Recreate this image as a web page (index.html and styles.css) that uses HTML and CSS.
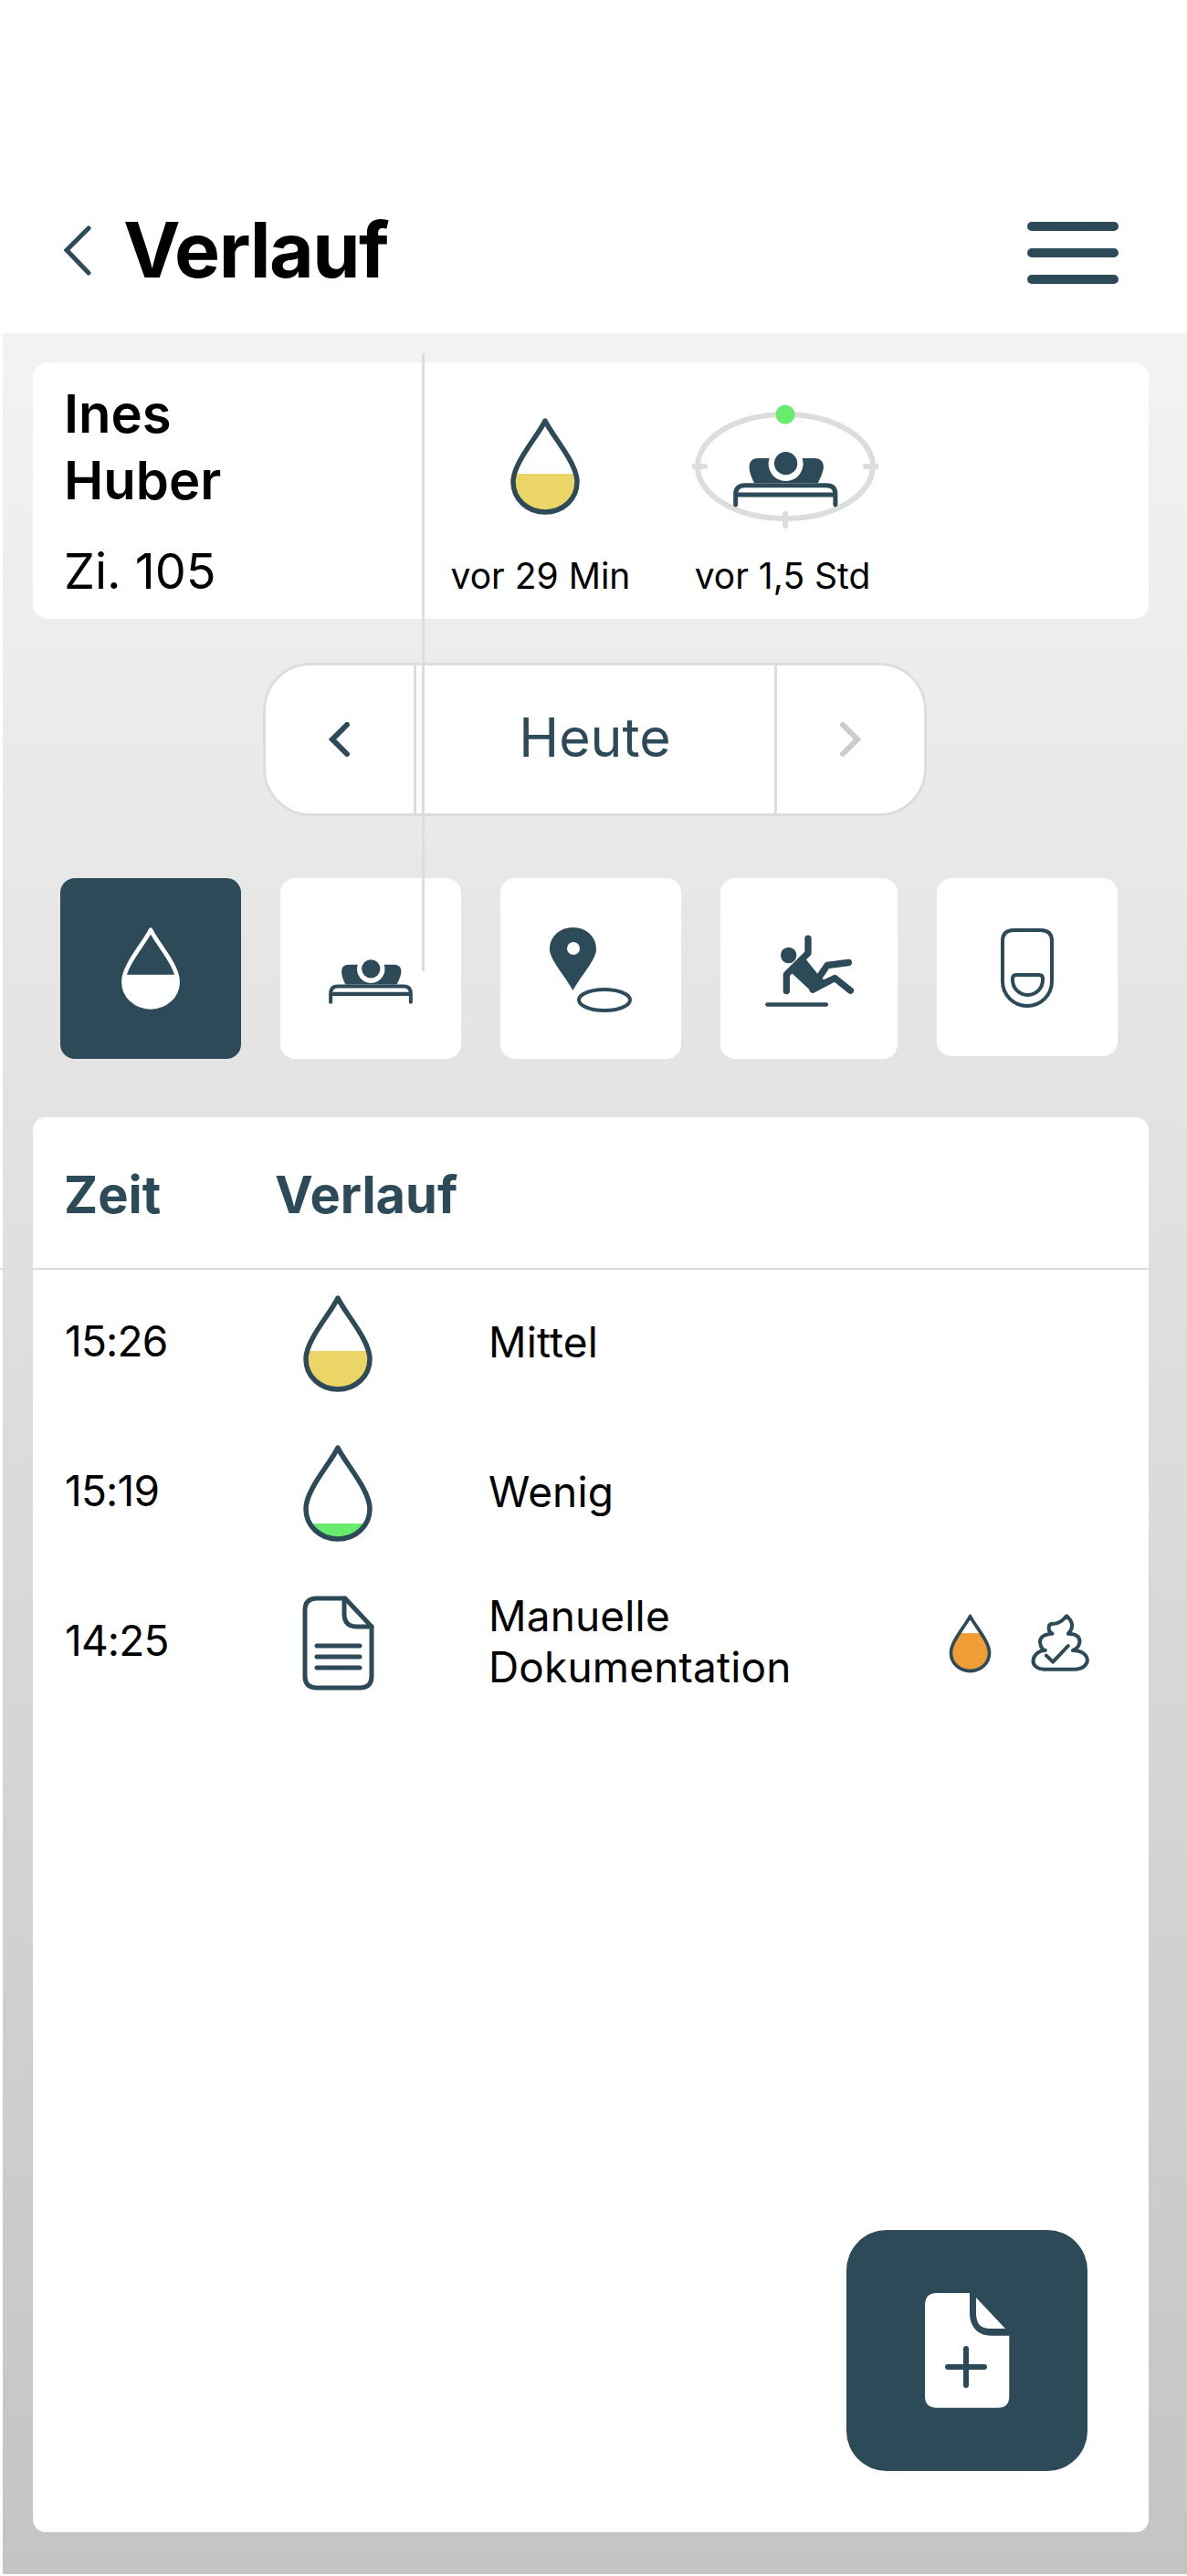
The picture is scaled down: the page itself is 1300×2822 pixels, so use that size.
FILE: index.html
```html
<!DOCTYPE html>
<html lang="de">
<head>
    <meta charset="UTF-8">
    <title>Verlauf</title>
    <link rel="stylesheet" href="styles.css">
</head>
<body>
    <svg class="defs" width="0" height="0">
        <defs>
            <path id="drop-shape" d="M39 4C31 21 4 50 4 71C4 90 20 104 39 104C58 104 74 90 74 71C74 50 47 21 39 4Z"/>
            <clipPath id="drop-clip"><use href="#drop-shape"/></clipPath>
            <g id="bed-shape">
                <path class="bed-fill" d="M69 102C57 79 53 64 53 49C53 32 63 21 82 21H119A57 57 0 1 0 227 21H267C287 21 297 32 297 49C297 64 289 82 279 102Z"/>
                <circle class="bed-fill" cx="173" cy="38" r="38"/>
                <path class="bed-line" d="M8 174V139C8 120 19 110 37 110H307C327 110 336 120 336 139V174M8 141H336"/>
            </g>
        </defs>
    </svg>

    <header class="topbar">
        <div class="topbar-left">
            <svg class="back" viewBox="0 0 30 55"><path d="M27 3L3 27L27 52"/></svg>
            <h1>Verlauf</h1>
        </div>
        <div class="menu"><span></span><span></span><span></span></div>
    </header>

    <main class="content">
        <section class="patient">
            <div class="patient-name">
                <div class="name">Ines<br>Huber</div>
                <div class="room">Zi. 105</div>
            </div>
            <div class="status status-drop">
                <svg class="drop-head" viewBox="0 0 78 108">
                    <use href="#drop-shape" fill="#fff"/>
                    <rect x="0" y="62" width="78" height="46" fill="#ecd567" clip-path="url(#drop-clip)"/>
                    <use href="#drop-shape" class="drop-line"/>
                </svg>
                <span>vor 29 Min</span>
            </div>
            <div class="status status-bed">
                <svg class="bed-ring" viewBox="0 0 204 136">
                    <ellipse class="ring" cx="102" cy="68" rx="96" ry="57"/>
                    <path class="ring-tick" d="M1 68H14M190 68H203M102 120V133"/>
                    <circle cx="102" cy="11" r="10.5" fill="#68ec6e"/>
                    <use href="#bed-shape" transform="translate(45 52) scale(0.333)"/>
                </svg>
                <span>vor 1,5 Std</span>
            </div>
        </section>

        <nav class="day-pill">
            <div class="day-arrow">
                <svg class="small-chevron" viewBox="0 0 24 38"><path d="M20 3L4 19L20 35"/></svg>
            </div>
            <div class="day-label">Heute</div>
            <div class="day-arrow">
                <svg class="small-chevron off" viewBox="0 0 24 38"><path d="M4 3L20 19L4 35"/></svg>
            </div>
        </nav>

        <div class="tiles">
            <div class="tile active">
                <svg class="tile-drop" viewBox="0 0 78 108">
                    <rect x="0" y="62" width="78" height="46" fill="#fff" clip-path="url(#drop-clip)"/>
                    <use href="#drop-shape" class="drop-line white"/>
                </svg>
            </div>
            <div class="tile">
                <svg class="tile-bed" viewBox="0 0 344 182"><use href="#bed-shape"/></svg>
            </div>
            <div class="tile">
                <svg class="tile-pin" viewBox="0 0 90 93">
                    <path fill="#2d4a59" d="M25.5 69C16 52 0 35 0 24C0 10 11 0 25.5 0C40 0 51 10 51 24C51 35 35 52 25.5 69Z"/>
                    <circle cx="26" cy="23" r="7" fill="#fff"/>
                    <ellipse cx="60" cy="79.5" rx="28" ry="11.5" fill="none" stroke="#2d4a59" stroke-width="4"/>
                </svg>
            </div>
            <div class="tile narrow">
                <svg class="tile-fall" viewBox="350 225 300 245">
                    <circle cx="433" cy="295" r="26" fill="#2d4a59"/>
                    <path fill="#2d4a59" d="M426 358L487 305L530 358L548 375L585 360L512 418L445 355Z"/>
                    <path class="fall-line" d="M497 240V288L426 358V412M630 319L560 328L530 372M636 411L585 370L512 408"/>
                    <path class="fall-floor" d="M363 457H557"/>
                </svg>
            </div>
            <div class="tile short">
                <svg class="tile-toilet" viewBox="0 0 62 89">
                    <path class="toilet-line" d="M16 4H46Q58 4 58 16V60A27 27 0 0 1 4 60V16Q4 4 16 4Z"/>
                    <path class="toilet-line" d="M19 53H44Q48 53 48 57V58.500A16.500 16.500 0 0 1 15 58.500V57Q15 53 19 53Z"/>
                </svg>
            </div>
        </div>

        <section class="history">
            <div class="history-head">
                <div>Zeit</div>
                <div>Verlauf</div>
            </div>
            <div class="row">
                <div class="time">15:26</div>
                <svg class="drop-row" viewBox="0 0 78 108">
                    <rect x="0" y="62" width="78" height="46" fill="#ecd567" clip-path="url(#drop-clip)"/>
                    <use href="#drop-shape" class="drop-line"/>
                </svg>
                <div class="label">Mittel</div>
            </div>
            <div class="row">
                <div class="time">15:19</div>
                <svg class="drop-row" viewBox="0 0 78 108">
                    <rect x="0" y="87" width="78" height="21" fill="#68ec6e" clip-path="url(#drop-clip)"/>
                    <use href="#drop-shape" class="drop-line"/>
                </svg>
                <div class="label">Wenig</div>
            </div>
            <div class="row">
                <div class="time">14:25</div>
                <svg class="doc-row" viewBox="0 0 79 104">
                    <path class="doc-line" d="M16 3H47L76 34V88Q76 101 63 101H16Q3 101 3 88V16Q3 3 16 3Z"/>
                    <path class="doc-line" d="M46 3V20Q46 34 60 34H76M16 55H63M16 67H63M16 79H63"/>
                </svg>
                <div class="label">Manuelle<br>Dokumentation</div>
                <div class="extras">
                    <svg class="drop-small" viewBox="0 0 78 108">
                        <rect x="0" y="35" width="78" height="73" fill="#ef9d36" clip-path="url(#drop-clip)"/>
                        <use href="#drop-shape" class="drop-line"/>
                    </svg>
                    <svg class="poop" viewBox="385 85 200 195">
                        <path class="poop-line" d="M430 267H530C560 267 573 250 573 238C573 220 555 205 525 205C550 195 553 170 540 158C530 150 515 150 510 150C530 130 525 110 505 92C490 110 475 120 455 118C443 120 443 145 458 150C430 150 415 165 418 180C420 195 428 203 435 205C410 205 395 225 395 240C395 255 410 267 430 267Z"/>
                        <path class="poop-line" d="M438 222L460 243L510 190"/>
                    </svg>
                </div>
            </div>

            <button class="add-btn">
                <svg class="add-icon" viewBox="0 0 93 126">
                    <path fill="#fff" d="M13 0H49V22C49 37 58 46.700 72 46.700H92.300V113Q92.300 125.700 80 125.700H13Q0 125.700 0 113V13Q0 0 13 0Z"/>
                    <path fill="#fff" d="M56 5L88 39H70Q56 39 56 22Z"/>
                    <path class="add-plus" d="M45 61V101M25 81H65"/>
                </svg>
            </button>
        </section>
    </main>

    <!-- thin guide lines that sit on top of everything in the capture -->
    <div class="guide-v"></div>
    <div class="guide-h"></div>
</body>
</html>
```

FILE: styles.css
```css
* {
    box-sizing: border-box;
}

body {
    position: relative;
    margin: 0;
    height: 2822px;
    background-color: #fff;
    color: #000;
    font-family: Inter, "Liberation Sans", sans-serif;
    overflow: hidden;
}

.defs {
    position: absolute;
}

.bed-fill {
    fill: #2d4a59;
}

.bed-line {
    fill: none;
    stroke: #2d4a59;
    stroke-width: 15;
    stroke-linecap: round;
}

.drop-line {
    fill: none;
    stroke: #2d4a59;
    stroke-width: 5.5;
    stroke-linejoin: round;
}

.drop-line.white {
    stroke: #fff;
}

/* header */
.topbar {
    display: flex;
    justify-content: space-between;
    height: 365px;
    padding: 222px 75px 0 70px;
}

.topbar-left {
    display: flex;
    align-items: center;
    height: 104px;
}

.back {
    width: 30px;
    height: 55px;
    margin-right: 35px;
}

.back path {
    fill: none;
    stroke: #2d4a59;
    stroke-width: 5;
    stroke-linecap: round;
}

h1 {
    margin: 0;
    font-size: 84px;
    font-weight: 700;
    line-height: 104px;
    letter-spacing: -1.5px;
}

.menu {
    display: flex;
    flex-direction: column;
    gap: 19px;
    width: 100px;
    padding-top: 21px;
}

.menu span {
    height: 10px;
    border-radius: 5px;
    background-color: #2d4a59;
}

/* grey area */
.content {
    height: 2455px;
    margin-left: 3px;
    padding: 32px 42px 46px 33px;
    background: linear-gradient(#f3f3f3, #c4c4c4);
}

.patient {
    display: flex;
    height: 281px;
    border-radius: 16px;
    background-color: #fff;
}

.patient-name {
    width: 456px;
    padding: 20px 0 0 34px;
}

.name {
    font-size: 58px;
    font-weight: 600;
    line-height: 73px;
}

.room {
    margin-top: 31px;
    font-size: 54px;
    line-height: 64px;
}

.status {
    display: flex;
    flex-direction: column;
    align-items: center;
    font-size: 39px;
    line-height: 48px;
    white-space: nowrap;
}

.status svg {
    flex-shrink: 0;
}

.status-drop {
    width: 200px;
    padding-top: 60px;
}

.status-bed {
    width: 204px;
    margin-left: 63px;
    padding-top: 46px;
}

.drop-head {
    width: 78px;
    height: 108px;
    margin: 0 0 42px 10px;
}

.bed-ring {
    width: 204px;
    height: 136px;
    margin: 0 0 28px 6px;
}

.ring {
    fill: none;
    stroke: #ddd;
    stroke-width: 6;
}

.ring-tick {
    fill: none;
    stroke: #ddd;
    stroke-width: 6;
    stroke-linecap: round;
}

/* day switch */
.day-pill {
    display: flex;
    width: 727px;
    height: 168px;
    margin: 48px 0 0 252px;
    border: 3px solid #ddd;
    border-radius: 52px;
    background-color: #fff;
}

.day-arrow {
    display: flex;
    flex: 1;
    align-items: center;
    justify-content: center;
}

.small-chevron {
    width: 24px;
    height: 38px;
}

.small-chevron path {
    fill: none;
    stroke: #2d4a59;
    stroke-width: 6;
    stroke-linecap: round;
}

.small-chevron.off path {
    stroke: #ccc;
}

.day-label {
    width: 398px;
    border-left: 3px solid #ddd;
    border-right: 3px solid #ddd;
    color: #2d4a59;
    font-size: 59px;
    line-height: 158px;
    text-align: center;
}

/* category tiles */
.tiles {
    display: flex;
    align-items: flex-start;
    gap: 43px;
    margin-top: 68px;
    padding-left: 30px;
}

.tile {
    display: flex;
    align-items: center;
    justify-content: center;
    width: 198px;
    height: 198px;
    border-radius: 16px;
    background-color: #fff;
}

.tile.active {
    background-color: #2d4a59;
}

.tile.narrow {
    width: 194px;
}

.tile.short {
    height: 195px;
}

.tile-drop {
    width: 66px;
    height: 92px;
}

.tile-bed {
    width: 92px;
    height: 49px;
    margin-top: 28px;
}

.tile-pin {
    width: 90px;
    height: 93px;
    margin: 3px 0 0 0;
}

.tile-fall {
    width: 100px;
    height: 82px;
    margin: 6px 0 0 0;
}

.fall-line {
    fill: none;
    stroke: #2d4a59;
    stroke-width: 22;
    stroke-linecap: round;
    stroke-linejoin: round;
}

.fall-floor {
    fill: none;
    stroke: #2d4a59;
    stroke-width: 13;
    stroke-linecap: round;
}

.tile-toilet {
    width: 62px;
    height: 89px;
}

.toilet-line {
    fill: none;
    stroke: #2d4a59;
    stroke-width: 4;
}

/* history list */
.history {
    position: relative;
    height: 1550px;
    margin-top: 64px;
    border-radius: 14px;
    background-color: #fff;
}

.history-head {
    display: grid;
    grid-template-columns: 231px 1fr;
    height: 166px;
    padding: 50px 0 0 34px;
    color: #2d4a59;
    font-size: 56px;
    font-weight: 700;
    line-height: 70px;
}

.row {
    display: grid;
    grid-template-columns: 260px 204px 1fr auto;
    align-items: center;
    height: 164px;
    padding: 0 63px 0 35px;
    font-size: 46px;
    line-height: 56px;
}

.time {
    margin-bottom: 6px;
    letter-spacing: -0.8px;
}

.label {
    margin-bottom: 5px;
    letter-spacing: 0.15px;
}

.drop-row {
    width: 78px;
    height: 108px;
}

.doc-row {
    width: 79px;
    height: 104px;
}

.doc-line {
    fill: none;
    stroke: #2d4a59;
    stroke-width: 5;
    stroke-linecap: round;
    stroke-linejoin: round;
}

.extras {
    display: flex;
    align-items: center;
    gap: 42px;
}

.drop-small {
    width: 47px;
    height: 65px;
}

.drop-small .drop-line {
    stroke-width: 6;
}

.poop {
    width: 67px;
    height: 65px;
}

.poop-line {
    fill: none;
    stroke: #2d4a59;
    stroke-width: 12;
    stroke-linecap: round;
    stroke-linejoin: round;
}

.add-btn {
    position: absolute;
    right: 67px;
    bottom: 67px;
    display: flex;
    align-items: center;
    justify-content: center;
    width: 264px;
    height: 264px;
    padding: 0;
    border: none;
    border-radius: 44px;
    background-color: #2d4a59;
}

.add-icon {
    width: 93px;
    height: 126px;
}

.add-plus {
    fill: none;
    stroke: #2d4a59;
    stroke-width: 6;
    stroke-linecap: round;
}

.guide-v {
    position: absolute;
    top: 387px;
    left: 462px;
    width: 3px;
    height: 677px;
    background-color: #ddd;
}

.guide-h {
    position: absolute;
    top: 1389px;
    left: 0;
    width: 100%;
    height: 2px;
    background-color: #ddd;
}
```
